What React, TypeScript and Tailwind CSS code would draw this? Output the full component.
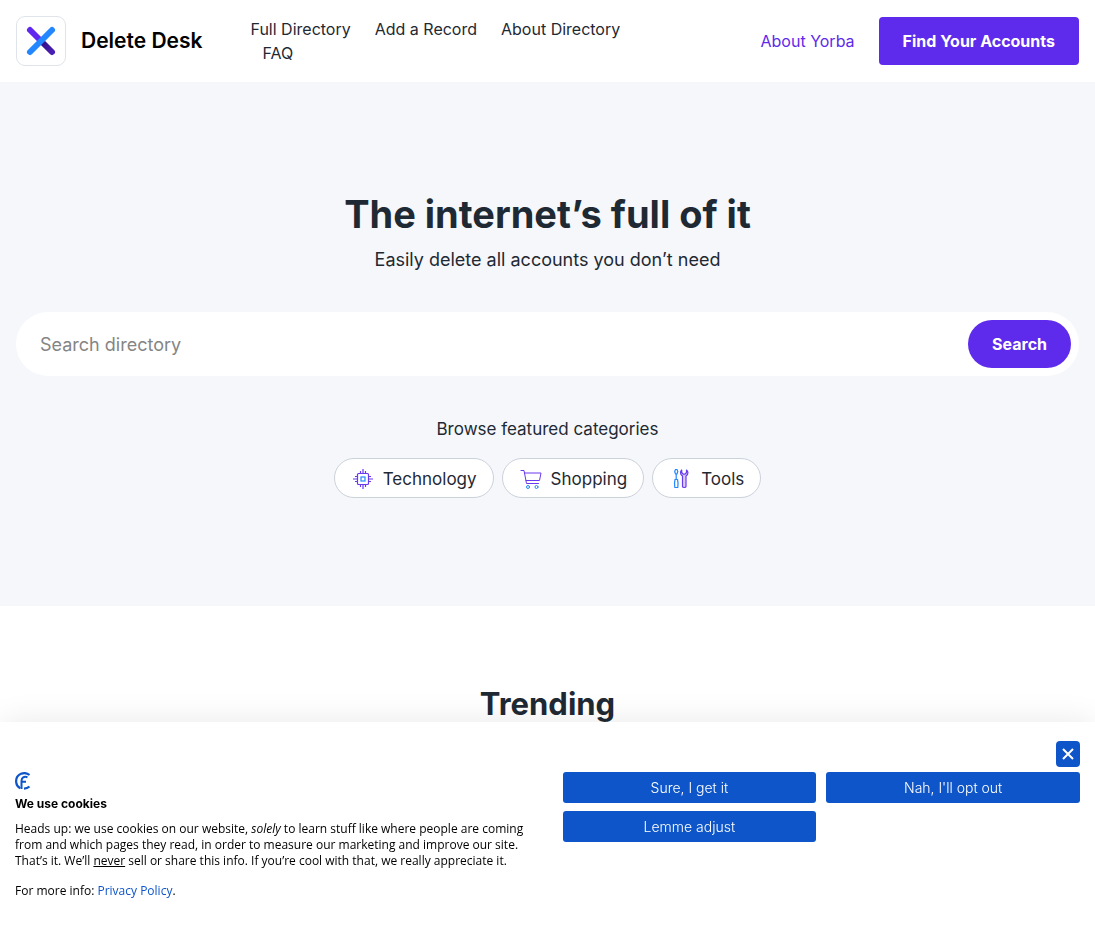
import type { ReactNode } from "react";

const navLinks = ["Full Directory", "Add a Record", "About Directory", "FAQ"];

function Logo() {
  return (
    <svg viewBox="0 0 50 50" className="size-[50px] shrink-0" aria-hidden="true">
      <defs>
        <linearGradient id="logo-stroke" x1="0" y1="0" x2="1" y2="1">
          <stop offset="0.4" stopColor="#6028ee" />
          <stop offset="0.62" stopColor="#34128a" />
          <stop offset="1" stopColor="#4a1fb4" />
        </linearGradient>
      </defs>
      <rect x="0.5" y="0.5" width="49" height="49" rx="8.5" fill="#fff" stroke="#dfe4ea" />
      <path d="M14 14 36 36" stroke="url(#logo-stroke)" strokeWidth="6" strokeLinecap="round" />
      <path d="M36 14 14 36" stroke="#2388ff" strokeWidth="6" strokeLinecap="round" />
    </svg>
  );
}

function ChipIcon() {
  return (
    <svg viewBox="0 0 24 24" className="size-6" fill="none" aria-hidden="true">
      <g stroke="#6a3aee" strokeWidth="1.2">
        <rect x="6.5" y="6.5" width="11" height="11" rx="1" />
        <path d="M9.5 6.500V4M12 6.500V2M14.500 6.500V4M9.500 17.500V20M12 17.500V22M14.500 17.500V20M6.500 9.500H4M6.500 12H2M6.500 14.500H4M17.500 9.500H20M17.500 12H22M17.500 14.500H20" />
      </g>
      <rect x="10" y="10" width="4" height="4" stroke="#2388ff" strokeWidth="1.2" />
    </svg>
  );
}

function CartIcon() {
  return (
    <svg viewBox="0 0 24 24" className="size-6" fill="none" strokeLinecap="round" strokeLinejoin="round" aria-hidden="true">
      <path d="M2 3.500H5L7.500 16.500H19.500M5.500 6H22L20.500 13.500H7" stroke="#6a3aee" />
      <circle cx="9" cy="20" r="1.500" stroke="#2388ff" />
      <circle cx="17.500" cy="20" r="1.500" stroke="#2388ff" />
    </svg>
  );
}

function ToolsIcon() {
  return (
    <svg viewBox="0 0 24 24" className="size-6" fill="none" strokeLinejoin="round" strokeWidth="1.2" aria-hidden="true">
      <path d="M6.500 2.500h1.500l.8 2-.8 2.500h-1.500l-.8-2.500zM7.200 7v5.500M6 12.500h2.500c.6 2 .8 5 .3 8h-3c-.5-3-.3-6 .2-8z" stroke="#2388ff" />
      <path
        d="M12.700 3v2.500l1.500 1.700h1.800l1.500-1.700V3c1.700 1.200 2.300 4-.5 6v10.500c0 1.300-3.500 1.300-3.500 0V9c-2.800-2-2.300-4.800-.8-6z"
        stroke="#6a3aee"
        fill="#d9ccfb"
      />
    </svg>
  );
}

function ConsentLogo() {
  return (
    <svg viewBox="0 0 16 18" className="h-[18px] w-4" fill="none" stroke="#0d55c9" aria-hidden="true">
      <path d="M14.500 3C12.500 1.200 9 .7 6 1.800 2.500 3.300.8 6.800 1.200 10.300c.3 2.600 1.800 4.800 4 5.900" strokeWidth="2.200" />
      <path d="M12.500 5.200c-3.500-1-6 .3-6 3.800v8M6.500 9.800h4.500" strokeWidth="2" />
      <path d="M9 16.600c2.300 0 4-.7 5.500-2.100" strokeWidth="2.200" />
    </svg>
  );
}

function Category({ icon, children }: { icon: ReactNode; children: ReactNode }) {
  return (
    <a href="#" className="flex h-10 items-center gap-2 rounded-full border border-[#cbd2da] bg-white px-4 pt-0.5 text-[17px] leading-6">
      {icon}
      {children}
    </a>
  );
}

function ConsentButton({ children }: { children: ReactNode }) {
  return (
    <button type="button" className="h-[31px] rounded-[3px] bg-[#0d55c9] text-[14px] font-light text-white">
      {children}
    </button>
  );
}

export default function App() {
  return (
    <div className="min-h-screen bg-white font-['Inter',sans-serif] text-[#1f2933]">
      <header className="flex items-center bg-white p-4">
        <a href="#" className="mr-12 flex shrink-0 items-center gap-[15px] text-[21px] font-semibold text-black">
          <Logo />
          Delete Desk
        </a>
        <nav className="flex max-w-96 flex-wrap text-[16px] leading-6">
          {navLinks.map((label) => (
            <a key={label} href="#" className="mx-3 first:ml-0">
              {label}
            </a>
          ))}
        </nav>
        <div className="ml-auto flex shrink-0 items-center gap-6">
          <a href="#" className="text-[16px] text-[#5e2aeb]">
            About Yorba
          </a>
          <a href="#" className="flex h-12 items-center rounded bg-[#5e2aeb] px-6 text-[16px] font-bold text-white">
            Find Your Accounts
          </a>
        </div>
      </header>

      <main>
        <section className="bg-[#f5f7fb] px-4 pt-27 pb-27 text-center">
          <h1 className="text-[38px] leading-12 font-bold">The internet’s full of it</h1>
          <p className="mt-2 text-[18px] leading-7">Easily delete all accounts you don’t need</p>
          <form className="mt-[38px] flex h-16 items-center rounded-full bg-white p-2 pl-6" onSubmit={(e) => e.preventDefault()}>
            <input
              type="search"
              aria-label="Search directory"
              placeholder="Search directory"
              className="h-full min-w-0 flex-1 bg-transparent text-[18px] outline-none placeholder:text-[#858585]"
            />
            <button type="submit" className="h-12 rounded-full bg-[#5e2aeb] px-6 text-[16px] font-bold text-white">
              Search
            </button>
          </form>
          <h2 className="mt-[41px] text-[17px] leading-6">Browse featured categories</h2>
          <div className="mt-[17px] flex flex-wrap justify-center gap-2">
            <Category icon={<ChipIcon />}>Technology</Category>
            <Category icon={<CartIcon />}>Shopping</Category>
            <Category icon={<ToolsIcon />}>Tools</Category>
          </div>
        </section>
        <section className="px-4 pt-20 text-center">
          <h2 className="text-[31px] leading-9 font-bold">Trending</h2>
        </section>
      </main>

      <aside
        aria-label="Cookie consent"
        className="fixed inset-x-0 bottom-0 bg-white px-[15px] pt-[19px] pb-[31px] text-black shadow-[0_0_32px_-2px_rgba(0,0,0,0.1)]"
      >
        <div className="flex justify-end">
          <button type="button" aria-label="Close" className="flex h-[26px] w-6 items-center justify-center rounded bg-[#0d55c9] text-white">
            <svg viewBox="0 0 12 12" className="size-3" stroke="currentColor" strokeWidth="2" aria-hidden="true">
              <path d="M1 1 11 11M11 1 1 11" />
            </svg>
          </button>
        </div>
        <div className="mt-[5px] grid grid-cols-2 gap-[30px]">
          <div className="font-['Open_Sans',sans-serif] text-[12px]">
            <ConsentLogo />
            <h2 className="mt-1 font-['Inter',sans-serif] leading-5 font-bold">We use cookies</h2>
            <p className="mt-[7px] leading-4">
              Heads up: we use cookies on our website, <em>solely</em> to learn stuff like where people are coming from and which
              pages they read, in order to measure our marketing and improve our site. That’s it. We’ll <u>never</u> sell or share
              this info. If you’re cool with that, we really appreciate it.
            </p>
            <p className="mt-[13px] leading-[18px]">
              For more info:{" "}
              <a href="#" className="text-[#0d55c9]">
                Privacy Policy
              </a>
              .
            </p>
          </div>
          <div className="grid grid-cols-2 content-start gap-x-2.5 gap-y-2">
            <ConsentButton>Sure, I get it</ConsentButton>
            <ConsentButton>Nah, I'll opt out</ConsentButton>
            <ConsentButton>Lemme adjust</ConsentButton>
          </div>
        </div>
      </aside>
    </div>
  );
}
